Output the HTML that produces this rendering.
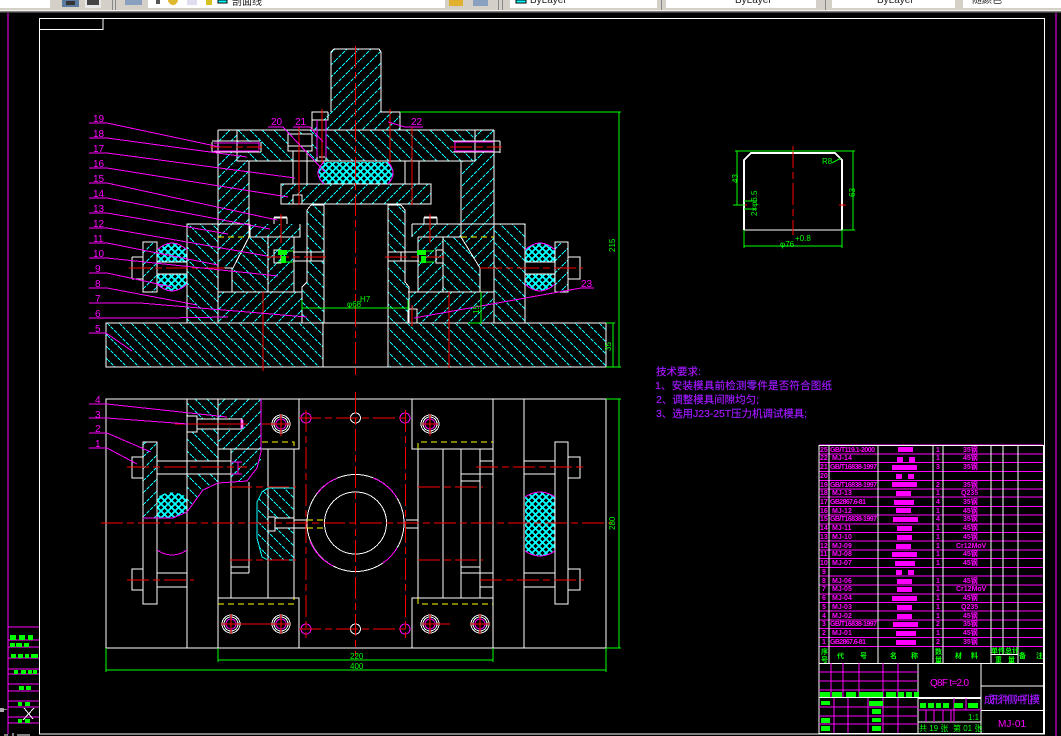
<!DOCTYPE html>
<html><head><meta charset="utf-8"><title>CAD</title>
<style>
html,body{margin:0;padding:0;background:#000;width:1061px;height:736px;overflow:hidden}
svg{display:block;position:absolute;left:0;top:0}
.w{stroke:#fff;fill:none;stroke-width:1}
.m{stroke:#f0f;fill:none;stroke-width:1}
.r{stroke:#f00;fill:none;stroke-width:1}
.d{stroke-dasharray:22 4 7 4}
.g{stroke:#0f0;fill:none;stroke-width:1}
.y{stroke:#ff0;fill:none;stroke-dasharray:6 4}
.c{stroke:#0ff;fill:none}
.k{fill:#000;stroke:none}
text{font-family:"Liberation Sans","Noto Sans CJK SC",sans-serif}
.tm{fill:#f0f;font-size:10px}
.tg{fill:#0f0;font-size:8px}
.tt{fill:#f0f;font-size:7px;font-weight:bold}
.tc{fill:#d800ff;font-size:10.5px;stroke:#4040ff;stroke-width:.15}
.th{fill:#0f0;font-size:7px;font-weight:bold}
.ui{fill:#222;font-size:10px}
</style></head><body>
<svg width="1061" height="736" viewBox="0 0 1061 736" shape-rendering="crispEdges">
<defs>
<pattern id="a" width="12" height="12" patternUnits="userSpaceOnUse"><path d="M-1,-1L13,13" stroke="#0ff" stroke-width="1" stroke-dasharray="4 1" fill="none"/></pattern>
<pattern id="b" width="12" height="12" patternUnits="userSpaceOnUse"><path d="M-1,13L13,-1" stroke="#0ff" stroke-width="1" stroke-dasharray="4 1" fill="none"/></pattern>
<pattern id="x" width="7" height="7" patternUnits="userSpaceOnUse"><path d="M-1,-1L8,8M-1,8L8,-1" stroke="#0ff" stroke-width="1.7" fill="none"/></pattern>
</defs>
<rect width="1061" height="736" fill="#000"/>

<!-- toolbar -->
<rect width="1061" height="11" fill="#d4d0c8"/>
<rect y="10" width="1061" height="1" fill="#f2f0ea"/>
<rect y="11" width="1061" height="1" fill="#808080"/>
<rect y="12" width="1061" height="1" fill="#404040"/>
<rect x="0" y="0" width="50" height="8" fill="#fff"/>
<rect x="62" y="0" width="17" height="7" fill="#5a7aa0"/><rect x="66" y="1" width="9" height="4" fill="#333"/>
<rect x="85" y="0" width="16" height="8" fill="#e8e8e8"/><rect x="87" y="0" width="12" height="5" fill="#444"/>
<rect x="112" y="0" width="1" height="10" fill="#888"/><rect x="115" y="0" width="1" height="10" fill="#888"/>
<rect x="125" y="0" width="17" height="5" fill="#8aa0c0"/>
<rect x="148" y="0" width="297" height="8" fill="#fff"/>
<rect x="156" y="0" width="4" height="4" fill="#555"/><circle cx="173" cy="0" r="5" fill="#e0b830"/>
<rect x="187" y="0" width="10" height="5" fill="#dde"/><rect x="206" y="0" width="6" height="5" fill="#d8c020"/>
<rect x="218" y="0" width="9" height="3" fill="#0ff" stroke="#000"/>
<text x="232" y="5" class="ui">剖面线</text>
<rect x="449" y="0" width="14" height="6" fill="#e0b030"/><rect x="473" y="0" width="15" height="6" fill="#8aa0c0"/>
<rect x="498" y="0" width="1" height="10" fill="#888"/><rect x="502" y="0" width="1" height="10" fill="#888"/>
<rect x="510" y="0" width="147" height="8" fill="#fff"/><rect x="516" y="0" width="10" height="3" fill="#0ff" stroke="#000"/>
<text x="530" y="3" class="ui">ByLayer</text>
<rect x="661" y="0" width="1" height="10" fill="#888"/>
<rect x="666" y="0" width="150" height="8" fill="#fff"/><text x="735" y="3" class="ui">ByLayer</text>
<rect x="825" y="0" width="1" height="10" fill="#888"/>
<rect x="832" y="0" width="123" height="8" fill="#fff"/><text x="877" y="3" class="ui">ByLayer</text>
<rect x="963" y="0" width="98" height="8" fill="#fff"/><text x="972" y="3" class="ui" fill="#888">随颜色</text>

<!-- frame -->
<path class="m" d="M8,13V734M1056,13V736"/>
<path class="w" d="M39.5,18.5H1044.5V734H39.5ZM39.5,29.5H103V18.5"/>

<!-- left strip -->
<path class="m" d="M8,627H39M8,640H39M8,647H39M8,658H39M8,669H39M8,674H39M8,684H39M8,691H39M8,701H39M8,707H39M8,717H39M8,723H39"/>
<g fill="#0f0"><rect x="10" y="635" width="6" height="5"/><rect x="19" y="635" width="6" height="5"/><rect x="28" y="635" width="5" height="5"/>
<rect x="10" y="643" width="5" height="4"/><rect x="16" y="643" width="6" height="4"/><rect x="24" y="643" width="5" height="4"/>
<rect x="11" y="654" width="5" height="4"/><rect x="18" y="654" width="5" height="4"/><rect x="25" y="654" width="4" height="4"/><rect x="31" y="654" width="7" height="4"/>
<rect x="14" y="670" width="4" height="4"/><rect x="21" y="670" width="5" height="4"/><rect x="28" y="670" width="4" height="4"/><rect x="33" y="670" width="4" height="4"/>
<rect x="19" y="686" width="5" height="4"/><rect x="26" y="686" width="5" height="4"/>
<rect x="18" y="702" width="4" height="4"/><rect x="25" y="702" width="5" height="4"/>
<rect x="18" y="719" width="4" height="4"/><rect x="25" y="719" width="5" height="4"/></g>
<path class="w" d="M24,708L33,719M34,708L23,720" stroke-width="1.3"/>
<rect x="0" y="708" width="4" height="4" fill="#aaa"/><rect x="4" y="709" width="3" height="1" fill="#888"/>
<path class="w" d="M4,735H8M13,733V736M17,735H30"/>

<!-- ===== FRONT VIEW hatch ===== -->
<g stroke="none">
<rect x="106" y="323" width="217" height="44" fill="url(#a)"/>
<rect x="389" y="323" width="217" height="44" fill="url(#a)"/>
<polygon points="331,52 334,49 379,49 381,52 381,112 400,112 400,130 312,130 328,112 331,112" fill="url(#b)"/>
<polygon points="237,130 475,130 475,161 249,161 237,142" fill="url(#a)"/>
<polygon points="218,130 237,130 237,142 218,142" fill="url(#b)"/>
<polygon points="475,130 494,130 494,142 475,142" fill="url(#b)"/>
<polygon points="218,152 237,152 249,161 249,237 233,268 218,268" fill="url(#b)"/>
<polygon points="461,161 475,161 475,152 494,152 494,268 481,268 461,237" fill="url(#b)"/>
<rect x="187" y="224" width="31" height="99" fill="url(#a)"/>
<rect x="494" y="224" width="31" height="99" fill="url(#a)"/>
<rect x="250" y="224" width="50" height="13" fill="url(#b)"/>
<rect x="412" y="224" width="49" height="13" fill="url(#b)"/>
<polygon points="249,237 268,237 268,292 232,292 232,268" fill="url(#a)"/>
<polygon points="461,237 443,237 443,292 480,292 480,268" fill="url(#a)"/>
<rect x="268" y="237" width="26" height="55" fill="url(#b)"/>
<rect x="418" y="237" width="25" height="55" fill="url(#b)"/>
<rect x="218" y="292" width="84" height="31" fill="url(#b)"/>
<rect x="408" y="292" width="85" height="31" fill="url(#b)"/>
<polygon points="311,205 324,205 324,323 302,323 302,287 307,282 307,210" fill="url(#a)"/>
<polygon points="388,205 401,205 405,210 405,282 409,287 409,323 388,323" fill="url(#a)"/>
<rect x="281" y="184" width="150" height="20" fill="url(#b)"/>
<path d="M324,162H388Q398,173 388,184H324Q312,173 324,162Z" fill="url(#x)"/>
<rect x="143" y="242" width="14" height="50" fill="url(#b)"/>
<rect x="555" y="242" width="13" height="50" fill="url(#b)"/>
<path d="M157,262V250Q172,236 187,250V262Z" fill="url(#x)"/>
<path d="M157,274V284Q172,298 187,284V274Z" fill="url(#x)"/>
<path d="M525,262V250Q540,236 555,250V262Z" fill="url(#x)"/>
<path d="M525,274V284Q540,298 555,284V274Z" fill="url(#x)"/>
</g>
<g class="k">
<rect x="293" y="147" width="14" height="37"/><rect x="405" y="161" width="14" height="23"/>
<rect x="293" y="252" width="31" height="9"/><rect x="388" y="252" width="31" height="9"/>
<rect x="218" y="268" width="14" height="24"/><rect x="481" y="268" width="12" height="24"/>
<rect x="157" y="262" width="30" height="12"/><rect x="525" y="262" width="30" height="12"/>
<rect x="288" y="134" width="24" height="17"/><rect x="317" y="120" width="9" height="41"/>
<rect x="212" y="142" width="48" height="10"/><rect x="453" y="142" width="47" height="10"/>
<rect x="408" y="309" width="9" height="14"/><rect x="293" y="195" width="9" height="9"/>
</g>

<!-- front view outlines -->
<g class="w">
<path d="M106,323H606V367H106ZM323,323V367M388,323V367"/>
<path d="M312,130V112H328M331,112V52L334,49H379L381,52V112H400V130"/>
<path d="M218,130H494M237,130V161H475V130M218,130V224M494,130V224M249,161V237M461,161V237"/>
<path d="M187,323V224H249M525,323V224H412M218,224V323M494,224V323"/>
<path d="M250,224V237H300V224M412,224V237M250,237H294M418,237H461"/>
<path d="M274,224V218H287V224M274,217H287M424,224V218H437V224M424,217H437"/>
<path d="M232,268V292H268V237M294,237V292M218,292H302M443,237V292H480V268M418,237V292M408,292H494"/>
<path d="M233,268H218M481,268H494" />
<path d="M311,205H324V323M311,205L307,210V282L302,287V323H324M401,205H388V323M401,205L405,210V282L409,287V323H388"/>
<path d="M281,184H431V204H281ZM281,204H430" />
<path d="M293,151V184M307,151V184M405,161V184M419,161V184M288,134H312V146H288ZM288,146V151H312V146M293,204V195H302V204"/>
<path d="M312,112V120H328V112M317,120V161M326,120V161M319,157H325"/>
<path d="M143,242H157V292H143ZM132,257H143M132,279H143M132,257V279M157,262H187M157,274H187"/>
<path d="M555,242H568V292H555ZM568,257H580V279H568M525,262H555M525,274H555"/>
<path d="M293,252H324M293,261H324M388,252H419M388,261H419M311,252V261M401,252V261"/>
<path d="M274,250H281V263H274ZM436,250H443V263H436Z" />
<path d="M408,309H417V323M408,309V323M249,237L233,268M461,237L480,268"/>
<path d="M212,142V152M261,142V152M212,141H260M212,152H260M500,141V153M453,141H500M453,152H500" stroke-width="1.4"/>
</g>
<g class="m">
<path d="M324,162Q312,173 324,184M388,162Q398,173 388,184"/>
<path d="M157,250Q172,236 187,250M157,284Q172,298 187,284M525,250Q540,236 555,250M525,284Q540,298 555,284"/>
<path d="M317,120V157M326,120V157M214,143H259M214,151H259M259,142V150M454,142H494M454,151H494M455,142V150"/>
</g>
<g class="y"><path d="M218,237H249M461,237H494"/></g>
<g class="r">
<path class="d" d="M355.5,46V375"/>
<path d="M263,292V371M449,292V368M299,127V205M412,127V205M322,109V163M390,109V163M281,214V243M430,214V243M412,305V326"/>
<path class="d" d="M129,268H227M480,268H583"/>
<path class="d" d="M267,257H327M385,257H447M210,147H262M450,147H502"/>
</g>
<!-- front leaders -->
<g class="m">
<path d="M89,123H107L220,147M89,138H107L247,157M89,153H107L295,178M89,168H107L288,197M89,183H107L277,220M89,198H107L270,229M89,213H107L228,234M89,228H107L267,256M89,243H107L218,265M89,258H107L278,276M89,273H107L172,287M89,288H107L197,305M89,303H140L307,317M89,318H165L228,317M89,333H106L132,351"/>
<path d="M268,127H283L325,172M293,127H310L323,142M423,127H405L388,122M594,288H581L414,318"/>
</g>
<g class="tm">
<text x="93" y="122">19</text><text x="93" y="137">18</text><text x="93" y="152">17</text><text x="93" y="167">16</text><text x="93" y="182">15</text><text x="93" y="197">14</text><text x="93" y="212">13</text><text x="93" y="227">12</text><text x="93" y="242">11</text><text x="93" y="257">10</text><text x="95" y="272">9</text><text x="95" y="287">8</text><text x="95" y="302">7</text><text x="95" y="317">6</text><text x="95" y="332">5</text>
<text x="271" y="125">20</text><text x="295" y="125">21</text><text x="411" y="125">22</text><text x="581" y="287">23</text>
<text x="95" y="403">4</text><text x="95" y="418">3</text><text x="95" y="432">2</text><text x="95" y="447">1</text>
</g>
<!-- front dims -->
<g class="g">
<path d="M400,112H621M619,112V367M606,367H621M606,323H615M613,323V367M302,308H408M302,300V310M408,300V310M481,292V323M468,323H481"/>
<path d="M278,251H293M278,262H293M419,251H434M419,262H434"/>
</g>
<g fill="#0f0">
<rect x="278" y="250" width="9" height="5"/><rect x="281" y="256" width="5" height="7"/><rect x="417" y="250" width="9" height="5"/><rect x="421" y="256" width="5" height="7"/>
</g>
<text class="tg" x="347" y="307">φ68</text><text class="tg" x="360" y="302" font-size="6">H7</text>
<text class="tg" transform="translate(615,252) rotate(-90)" font-size="9">215</text>
<text class="tg" transform="translate(611,351) rotate(-90)" font-size="9">35</text>
<text class="tg" transform="translate(479,314) rotate(-90)">15</text>

<!-- ===== BOTTOM VIEW ===== -->
<g stroke="none">
<polygon points="187,399 218,399 218,483 203,490 187,512" fill="url(#a)"/>
<polygon points="218,399 261,399 261,449 218,449" fill="url(#b)"/>
<polygon points="231,449 261,449 261,468 247,481 231,481" fill="url(#b)"/>
<polygon points="143,442 157,442 157,518 143,518" fill="url(#b)"/>
<path d="M157,518V497Q172,488 187,497V512L173,518Z" fill="url(#x)"/>
<path d="M268,488V560H294V487ZM268,488L262,492L257,502V538L262,557L268,560Z" fill="url(#a)"/>
<path d="M525,497Q540,487 555,497V551Q540,561 525,551Z" fill="url(#x)"/>
</g>
<g class="k"><rect x="157" y="461" width="75" height="13"/><rect x="197" y="419" width="45" height="10"/><rect x="187" y="416" width="10" height="16"/><rect x="268" y="517" width="7" height="14"/><rect x="275" y="518" width="19" height="10"/></g>
<g class="w">
<path d="M106,399H606V648H106ZM187,399V648M218,399V648M493,399V648M524,399V648"/>
<path d="M218,449H299V399M218,598H299V648M412,399V449H493M412,648V598H493"/>
<path d="M231,449V598M268,449V598M294,449V598M418,449V598M443,449V598M461,449V598M480,449V598"/>
<path d="M143,442H157V604H143ZM132,457H143V478H132ZM132,569H143V590H132Z"/>
<path d="M157,461H231M157,474H231M157,573H187M157,587H187"/>
<path d="M555,442H568V604H555ZM568,457H580V478H568M568,569H580V590H568M524,461H555M524,474H555M524,573H555M524,587H555M480,461H493M480,474H493M480,573H493M480,587H493"/>
<path d="M461,474H480M461,481H480M461,567H480M461,573H480M249,482V573M231,567H249M231,573H249"/>
<path d="M268,517H275V531H268ZM275,518H294V528H275M294,520H307M294,528H307M406,520H418M406,528H418"/>
<path d="M187,416H197V432H187M197,419H242V429H197M231,462V474H241"/>
<circle cx="355.5" cy="523" r="48.5"/><circle cx="355.5" cy="523" r="31"/>
<circle cx="355.5" cy="418" r="5"/><circle cx="355.5" cy="629" r="5"/>
<circle cx="281" cy="424" r="9"/><circle cx="281" cy="424" r="7"/><circle cx="231" cy="624" r="9"/><circle cx="231" cy="624" r="7"/><circle cx="281" cy="624" r="9"/><circle cx="281" cy="624" r="7"/><circle cx="430" cy="424" r="9"/><circle cx="430" cy="424" r="7"/><circle cx="430" cy="624" r="9"/><circle cx="430" cy="624" r="7"/><circle cx="480" cy="624" r="9"/><circle cx="480" cy="624" r="7"/>
</g>
<g class="m">
<circle cx="281" cy="424" r="5"/><circle cx="231" cy="624" r="5"/><circle cx="281" cy="624" r="5"/><circle cx="430" cy="424" r="5"/><circle cx="430" cy="624" r="5"/><circle cx="480" cy="624" r="5"/>
<circle cx="306" cy="418" r="5"/><circle cx="405" cy="418" r="5"/><circle cx="306" cy="629" r="5"/><circle cx="405" cy="629" r="5"/>
<path d="M143,518H173L187,512L203,490L218,483L247,481L257,468L261,452V399"/>
<path d="M157,550Q172,560 187,550M525,497Q540,487 555,497M525,551Q540,561 555,551"/>
<path d="M241,419V429M243,420V428M231,462H242M231,474H242M238,462V474" />
<path d="M317,494A48.5,48.5 0 0 1 337,478M310,541A48.5,48.5 0 0 0 333,566M373,478A48.5,48.5 0 0 1 397,498M397,548A48.5,48.5 0 0 1 383,563"/>
</g>
<path class="c" d="M268,488L262,492L257,502V538L262,557L268,560H294M268,488H294"/>
<path class="y" d="M262,442H294V449M218,604H294V598M418,449V442H493M418,598V604H493M307,520H325M307,528H325"/>
<g class="r">
<path class="d" d="M101,523H612"/>
<path class="d" d="M355.5,392V656"/>
<path class="d" d="M306,410V638M405.5,410V638"/>
<path class="d" d="M299,418H406M299,629H406"/>
<path class="d" d="M127,467H247M127,580H194M230,487H296M230,560H296M418,487H483M418,560H483M476,467H584M480,580H584"/>
<path d="M262,424H290M281,414V436M221,624H290M231,614V634M281,614V634M422,424H438M430,414V436M422,624H450M470,624H490M430,614V634M480,614V634"/>
<path d="M175,424H248"/>
</g>
<g class="m">
<path d="M89,404H107L227,417M89,418H107L188,424M89,433H107L151,452M89,448H107L137,464"/>
</g>
<!-- bottom dims -->
<g class="g">
<path d="M218,648V662M493,648V662M218,660H493M106,648V672M606,648V672M106,670H606M606,399H621M606,648H621M619,399V648"/>
</g>
<text class="tg" x="350" y="659" font-size="8">220</text>
<text class="tg" x="350" y="669" font-size="8">400</text>
<text class="tg" transform="translate(615,530) rotate(-90)" font-size="9">280</text>

<!-- ===== PROFILE ===== -->
<g stroke="#fff" fill="none" stroke-width="2">
<path d="M744,230V160L751,153H835L842,160V230"/>
</g>
<path class="w" d="M744,230H843"/>
<g class="r"><path class="d" d="M793,146V235"/><path d="M741,205H747M839,205H846"/></g>
<g class="g">
<path d="M735,151H855M737,151V205M733,205H745M853,151V230M842,230H855M744,230V248M842,230V248M744,246H842M744,201H757M744,209H757"/>
</g>
<text class="tg" x="822" y="164" font-size="9">R8</text><path class="g" d="M832,163L841,158"/>
<text class="tg" transform="translate(738,183) rotate(-90)" font-size="9">43</text>
<text class="tg" transform="translate(855,197) rotate(-90)" font-size="9">63</text>
<text class="tg" transform="translate(757,216) rotate(-90)" font-size="8">2×φ6.5</text>
<text class="tg" x="780" y="247" font-size="9">φ76</text><text class="tg" x="795" y="241" font-size="6">+0.8</text>

<!-- tech text -->
<text class="tc" x="656" y="375" textLength="45" >技术要求:</text>
<text class="tc" x="655" y="389" textLength="177">1、安装模具前检测零件是否符合图纸</text>
<text class="tc" x="656" y="403" textLength="103">2、调整模具间隙均匀;</text>
<text class="tc" x="656" y="417" textLength="151">3、选用J23-25T压力机调试模具;</text>

<!-- ===== TABLE ===== -->
<g class="m">
<path d="M819,445H1043M819,454H1043M819,462.5H1043M819,471.5H1043M819,480.5H1043M819,489H1043M819,497H1043M819,506.5H1043M819,515H1043M819,524H1043M819,532.5H1043M819,541H1043M819,550H1043M819,558.5H1043M819,567.5H1043M819,576H1043M819,585H1043M819,594H1043M819,602.5H1043M819,611H1043M819,620H1043M819,628.5H1043M819,637.5H1043M819,646.5H1043"/>
</g>
<g class="w">
<path d="M819,445.5H1043.5V733.5H819ZM829,445V663M878,445V663M933,445V663M943,445V663M991,445V663M1003,445V655M1018,445V663"/>
<path d="M991,654.5H1018M819,663.5H1043M918,663V733M981,663V733M819,697.5H981M918,698.5H981M981,686H1043M981,710.5H1043M918,722H981"/>
</g>
<g fill="#f0f">
<rect x="898" y="447" width="15" height="5"/>
<rect x="897" y="457" width="6" height="5"/><rect x="909" y="457" width="6" height="5"/>
<rect x="892" y="465" width="25" height="5"/>
<rect x="896" y="474" width="6" height="5"/><rect x="908" y="474" width="6" height="5"/>
<rect x="892" y="482" width="25" height="5"/>
<rect x="896" y="491" width="15" height="5"/>
<rect x="894" y="500" width="20" height="5"/>
<rect x="896" y="508" width="15" height="5"/>
<rect x="893" y="517" width="25" height="5"/>
<rect x="897" y="526" width="15" height="5"/>
<rect x="897" y="535" width="15" height="5"/>
<rect x="896" y="544" width="15" height="5"/>
<rect x="892" y="552" width="25" height="5"/>
<rect x="895" y="561" width="20" height="5"/>
<rect x="896" y="570" width="6" height="5"/><rect x="908" y="570" width="6" height="5"/>
<rect x="897" y="579" width="15" height="5"/>
<rect x="897" y="587" width="15" height="5"/>
<rect x="892" y="596" width="25" height="5"/>
<rect x="897" y="605" width="15" height="5"/>
<rect x="897" y="614" width="15" height="5"/>
<rect x="893" y="622" width="25" height="5"/>
<rect x="896" y="631" width="20" height="5"/>
<rect x="896" y="640" width="20" height="5"/>
</g>
<g class="tt">
<text x="820" y="452">25</text><text x="830" y="452" textLength="45">GB/T119.1-2000</text><text x="936" y="452">1</text><text x="963" y="452">35钢</text>
<text x="820" y="460">22</text><text x="832" y="460">MJ-14</text><text x="936" y="460">1</text><text x="963" y="460">45钢</text>
<text x="820" y="469">21</text><text x="830" y="469" textLength="47">GB/T16838-1997</text><text x="936" y="469">3</text><text x="963" y="469">35钢</text>
<text x="820" y="478">20</text>
<text x="820" y="487">19</text><text x="830" y="487" textLength="47">GB/T16838-1997</text><text x="936" y="487">2</text><text x="963" y="487">35钢</text>
<text x="820" y="495">18</text><text x="832" y="495">MJ-13</text><text x="936" y="495">1</text><text x="961" y="495">Q235</text>
<text x="820" y="504">17</text><text x="830" y="504" textLength="36">GB2867.6-81</text><text x="936" y="504">4</text><text x="963" y="504">35钢</text>
<text x="820" y="513">16</text><text x="832" y="513">MJ-12</text><text x="936" y="513">1</text><text x="963" y="513">45钢</text>
<text x="820" y="521">15</text><text x="830" y="521" textLength="47">GB/T16838-1997</text><text x="936" y="521">4</text><text x="963" y="521">35钢</text>
<text x="820" y="530">14</text><text x="832" y="530">MJ-11</text><text x="936" y="530">1</text><text x="963" y="530">45钢</text>
<text x="820" y="539">13</text><text x="832" y="539">MJ-10</text><text x="936" y="539">1</text><text x="963" y="539">45钢</text>
<text x="820" y="548">12</text><text x="832" y="548">MJ-09</text><text x="936" y="548">1</text><text x="956" y="548">Cr12MoV</text>
<text x="820" y="556">11</text><text x="832" y="556">MJ-08</text><text x="936" y="556">1</text><text x="963" y="556">45钢</text>
<text x="820" y="565">10</text><text x="832" y="565">MJ-07</text><text x="936" y="565">1</text><text x="963" y="565">45钢</text>
<text x="822" y="574">9</text>
<text x="822" y="583">8</text><text x="832" y="583">MJ-06</text><text x="936" y="583">1</text><text x="963" y="583">45钢</text>
<text x="822" y="591">7</text><text x="832" y="591">MJ-05</text><text x="936" y="591">1</text><text x="956" y="591">Cr12MoV</text>
<text x="822" y="600">6</text><text x="832" y="600">MJ-04</text><text x="936" y="600">1</text><text x="963" y="600">45钢</text>
<text x="822" y="609">5</text><text x="832" y="609">MJ-03</text><text x="936" y="609">1</text><text x="961" y="609">Q235</text>
<text x="822" y="618">4</text><text x="832" y="618">MJ-02</text><text x="936" y="618">1</text><text x="963" y="618">45钢</text>
<text x="822" y="626">3</text><text x="830" y="626" textLength="47">GB/T16838-1997</text><text x="936" y="626">2</text><text x="963" y="626">35钢</text>
<text x="822" y="635">2</text><text x="832" y="635">MJ-01</text><text x="936" y="635">1</text><text x="963" y="635">45钢</text>
<text x="822" y="644">1</text><text x="830" y="644" textLength="36">GB2867.6-81</text><text x="936" y="644">2</text><text x="963" y="644">35钢</text>
</g>
<g class="th">
<text x="821" y="654">序</text><text x="821" y="662">号</text>
<text x="837" y="658">代</text><text x="860" y="658">号</text>
<text x="890" y="658">名</text><text x="911" y="658">称</text>
<text x="935" y="654">数</text><text x="935" y="662">量</text>
<text x="955" y="658">材</text><text x="971" y="658">料</text>
<text x="991" y="653">单件</text><text x="1005" y="653">总计</text>
<text x="995" y="662">重</text><text x="1008" y="662">量</text>
<text x="1019" y="658">备</text><text x="1036" y="658">注</text>
</g>
<!-- title block -->
<path class="m" d="M819,672H918M819,681H918M819,690H918M831,663V697M843,663V697M859,663V697M883,663V697M898,663V697"/>
<path class="m" d="M834,698V733M848,698V733M868,698V733M883,698V733M898,698V733M819,707H918M819,716H918M819,724H918"/>
<path class="m" d="M918,710H981M954,698V722M966,698V710M926,710V722M934,710V722M943,710V722M951,710V722"/>
<g fill="#0f0">
<rect x="820" y="692" width="10" height="5"/><rect x="832" y="692" width="10" height="5"/><rect x="846" y="692" width="10" height="5"/><rect x="859" y="692" width="24" height="5"/><rect x="886" y="692" width="10" height="5"/><rect x="898" y="692" width="6" height="5"/><rect x="906" y="692" width="6" height="5"/><rect x="914" y="692" width="5" height="5"/>
<rect x="821" y="701" width="9" height="4"/><rect x="869" y="701" width="14" height="5"/><rect x="872" y="709" width="9" height="5"/><rect x="821" y="718" width="9" height="5"/><rect x="872" y="718" width="9" height="4"/><rect x="821" y="726" width="9" height="5"/><rect x="872" y="726" width="9" height="5"/>
<rect x="920" y="703" width="6" height="5"/><rect x="928" y="703" width="6" height="5"/><rect x="936" y="703" width="5" height="5"/><rect x="943" y="703" width="6" height="5"/><rect x="954" y="703" width="9" height="5"/><rect x="968" y="703" width="10" height="5"/>
</g>
<text class="tg" x="968" y="720">1:1</text>
<text class="tg" x="919" y="731" font-size="7">共 19 张</text><text class="tg" x="953" y="731" font-size="7">第 01 张</text>
<text class="tm" x="930" y="686" textLength="39">Q8F t=2.0</text>
<text class="tc" x="984" y="703" textLength="56" font-size="8">成形件侧冲孔模</text>
<text class="tm" x="998" y="727" textLength="28" font-size="11">MJ-01</text>
</svg>
</body></html>
